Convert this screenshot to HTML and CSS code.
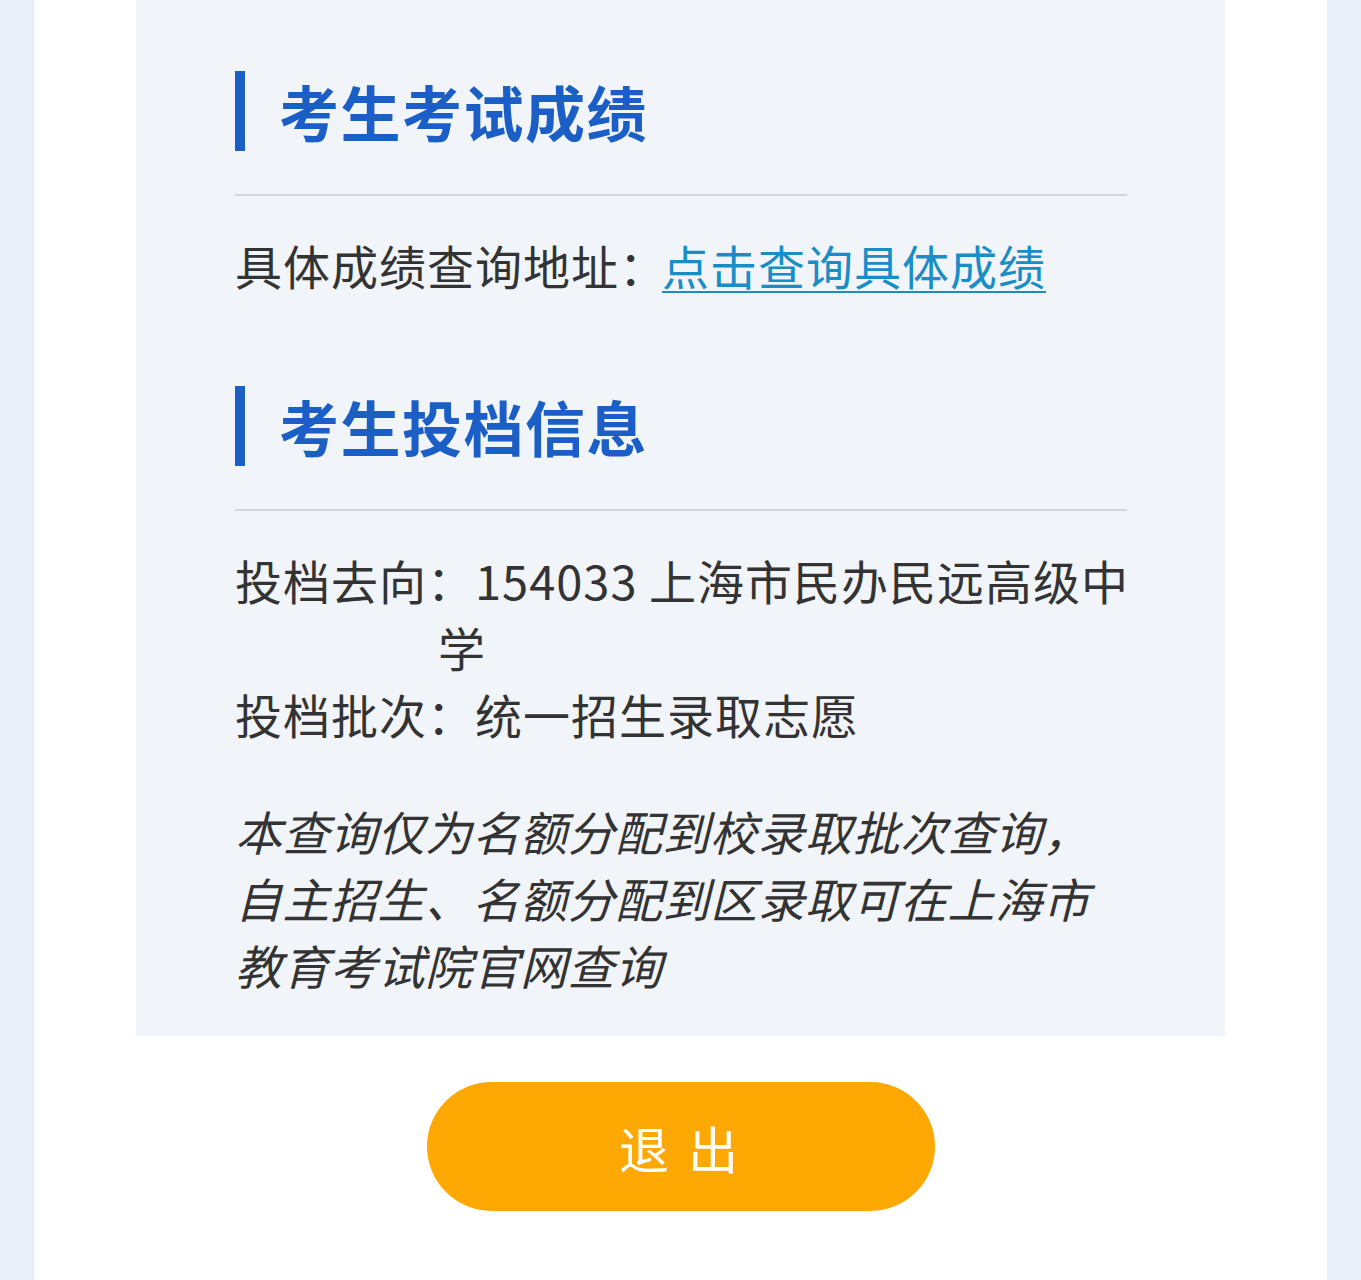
FILE: index.html
```html
<!DOCTYPE html>
<html lang="zh-CN">
<head>
<meta charset="utf-8">
<title>考生信息</title>
<link rel="stylesheet" href="styles.css">
</head>
<body>
<div class="page">
  <div class="panel">
    <h2 class="section-title">考生考试成绩</h2>
    <div class="divider"></div>
    <p class="row">具体成绩查询地址：<a class="link" href="#">点击查询具体成绩</a></p>

    <h2 class="section-title second">考生投档信息</h2>
    <div class="divider"></div>
    <p class="row hang">投档去向：154033 上海市民办民远高级中学</p>
    <p class="row">投档批次：统一招生录取志愿</p>

    <p class="note">本查询仅为名额分配到校录取批次查询，自主招生、名额分配到区录取可在上海市教育考试院官网查询</p>
  </div>
  <div class="actions">
    <button class="btn-exit">退&nbsp;出</button>
  </div>
</div>
</body>
</html>
```

FILE: styles.css
```css
html, body {
  margin: 0;
  padding: 0;
}
body {
  background: #e9eff8;
  font-family: "Noto Sans CJK SC", "Noto Sans", sans-serif;
  color: #333333;
}
.page {
  width: 1293px;
  min-height: 1280px;
  margin: 0 auto;
  background: #ffffff;
  padding: 0 102px;
  box-sizing: border-box;
}
.panel {
  background: #f1f4f9;
  padding: 71px 98px 38px 99px;
}
.section-title {
  margin: 0;
  height: 80px;
  border-left: 10px solid #1b5ec6;
  padding-left: 34px;
  font-size: 60px;
  font-weight: 700;
  line-height: 80px;
  color: #1b5ec6;
  letter-spacing: 1.5px;
}
.section-title.second {
  margin-top: 88px;
}
.divider {
  height: 2px;
  background: #d3d6db;
  margin-top: 43px;
  margin-bottom: 35px;
}
.row {
  margin: 0;
  font-size: 47px;
  line-height: 67px;
  letter-spacing: 1px;
  color: #333333;
}
.hang {
  padding-left: 203px;
  text-indent: -203px;
  margin-right: -12px;
}
.link {
  color: #1a8cc6;
  text-decoration: underline;
  text-decoration-thickness: 2px;
  text-underline-offset: 6px;
  margin-left: -5px;
}
.note {
  margin: 50px 0 0;
  font-size: 47px;
  line-height: 67px;
  letter-spacing: 0.5px;
  font-style: italic;
  color: #333333;
}
.actions {
  display: flex;
  justify-content: center;
  padding-top: 46px;
}
.btn-exit {
  width: 508px;
  height: 129px;
  border: none;
  border-radius: 65px;
  background: #fda803;
  color: #ffffff;
  font-family: "Noto Sans CJK SC", "Noto Sans", sans-serif;
  font-size: 50px;
  letter-spacing: 4px;
  padding: 0;
}
```
